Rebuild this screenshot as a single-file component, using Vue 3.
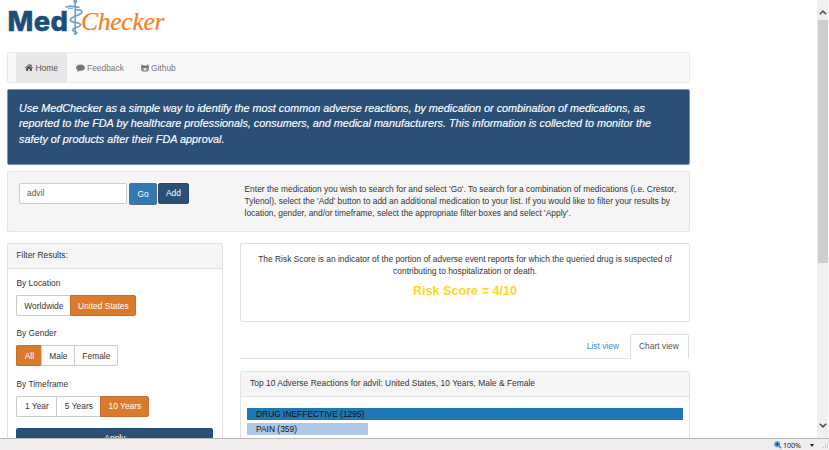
<script setup>
const navItems = [
  { label: 'Home', icon: 'home', active: true },
  { label: 'Feedback', icon: 'comment' },
  { label: 'Github', icon: 'github' },
]
const filters = [
  { title: 'By Location', options: [{ t: 'Worldwide', w: 54 }, { t: 'United States', w: 66, on: true }] },
  { title: 'By Gender', options: [{ t: 'All', w: 25, on: true }, { t: 'Male', w: 33 }, { t: 'Female', w: 44 }] },
  { title: 'By Timeframe', options: [{ t: '1 Year', w: 40 }, { t: '5 Years', w: 44 }, { t: '10 Years', w: 49, on: true }] },
]
const reactions = [
  { name: 'DRUG INEFFECTIVE', count: 1295, color: '#1f77b4' },
  { name: 'PAIN', count: 359, color: '#aec7e8' },
]
const barWidth = (count) => `${(count / 1295) * 100}%`
</script>

<template>
  <div class="window">
    <div class="viewport">
      <main class="page">
        <header class="logo">
          <span class="med">Med</span>
          <svg class="staff" viewBox="0 0 20 38" width="20" height="38" fill="none" stroke="#6f9fd4">
            <path d="M10.2 3V35" stroke-width="1.6" />
            <circle cx="10.2" cy="1.3" r="1.9" fill="#6f9fd4" stroke="none" />
            <path d="M0.5 7.2L5 6L14.5 7.3" stroke-width="1.7" />
            <path d="M3 8.2H8" stroke-width="1.2" />
            <path d="M11 10C17.5 9.5 19 12.5 14 14.6L8.5 17C3 19.5 5.5 22 11 22.6C17.5 23.5 16.5 26 11.5 27.4C7 28.7 6.3 30.5 10 31.6C13 32.6 12.5 33.5 9 34" stroke-width="1.7" />
          </svg>
          <span class="checker">Checker</span>
        </header>

        <nav class="navbar">
          <a v-for="item in navItems" :key="item.label" class="nav-item" :class="[item.icon, { active: item.active }]">
            <svg v-if="item.icon === 'home'" width="8" height="7" viewBox="0 0 16 14" fill="currentColor">
              <path d="M8 0L11 2.7V1H13.3V4.8L16 7.4L15 8.5L8 2.2L1 8.5L0 7.4Z" />
              <path d="M8 2.8L13.8 8V14H9.7V10H6.3V14H2.2V8Z" />
            </svg>
            <svg v-else-if="item.icon === 'comment'" width="9" height="8" viewBox="0 0 18 16" fill="currentColor">
              <path d="M9 1C14 1 18 3.8 18 7.3S14 13.5 9 13.5L7.5 13.4C6 14.8 4 15.6 1.7 15.8C3 14.7 3.5 13.6 3.5 12.3C1.3 11.2 0 9.4 0 7.3C0 3.8 4 1 9 1Z" />
            </svg>
            <svg v-else width="8" height="8" viewBox="0 0 16 16" fill="currentColor" fill-rule="evenodd">
              <path d="M1 0.500L5 2.800H11L15 0.500L15.500 5C16.500 9 16 15 11 15H5C0 15-0.500 9 0.500 5ZM4 8C2.500 9 2.500 13 8 13S13.500 9 12 8C11 7.500 10 8 8 8S5 7.500 4 8Z" />
              <ellipse cx="5.400" cy="10.200" rx="1.200" ry="1.600" />
              <ellipse cx="10.600" cy="10.200" rx="1.200" ry="1.600" />
            </svg>
            <span>{{ item.label }}</span>
          </a>
        </nav>

        <section class="banner">
          <p>Use MedChecker as a simple way to identify the most common adverse reactions, by medication or combination of medications, as</p>
          <p>reported to the FDA by healthcare professionals, consumers, and medical manufacturers. This information is collected to monitor the</p>
          <p>safety of products after their FDA approval.</p>
        </section>

        <section class="search">
          <form class="search-form" @submit.prevent>
            <input class="field" type="text" value="advil" />
            <button class="btn go">Go</button>
            <button class="btn add">Add</button>
          </form>
          <div class="help">
            <p>Enter the medication you wish to search for and select 'Go'. To search for a combination of medications (i.e. Crestor,</p>
            <p>Tylenol), select the 'Add' button to add an additional medication to your list. If you would like to filter your results by</p>
            <p>location, gender, and/or timeframe, select the appropriate filter boxes and select 'Apply'.</p>
          </div>
        </section>

        <div class="columns">
          <aside class="panel filter-panel">
            <h2 class="panel-heading">Filter Results:</h2>
            <div class="filter-body">
              <div v-for="f in filters" :key="f.title" class="filter">
                <h3>{{ f.title }}</h3>
                <div class="group">
                  <button v-for="o in f.options" :key="o.t" :class="{ on: o.on }" :style="{ width: o.w + 'px' }">{{ o.t }}</button>
                </div>
              </div>
              <button class="apply">Apply</button>
            </div>
          </aside>

          <div class="results">
            <section class="risk">
              <p>The Risk Score is an indicator of the portion of adverse event reports for which the queried drug is suspected of</p>
              <p>contributing to hospitalization or death.</p>
              <strong>Risk Score = 4/10</strong>
            </section>
            <div class="tabs">
              <a class="tab link">List view</a>
              <a class="tab current">Chart view</a>
            </div>
            <section class="panel chart-panel">
              <h2 class="panel-heading chart-title">Top 10 Adverse Reactions for advil: United States, 10 Years, Male &amp; Female</h2>
              <div class="chart">
                <div v-for="r in reactions" :key="r.name" class="bar" :style="{ width: barWidth(r.count), background: r.color }">
                  {{ r.name }} ({{ r.count }})
                </div>
              </div>
            </section>
          </div>
        </div>
      </main>

      <div class="scrollbar">
        <svg class="up" width="8" height="5" viewBox="0 0 8 5"><path d="M0.800 4.300L4 1.200L7.200 4.300" fill="none" stroke="#505050" stroke-width="1.600" /></svg>
        <div class="thumb"></div>
        <svg class="down" width="8" height="5" viewBox="0 0 8 5"><path d="M0.800 0.700L4 3.800L7.200 0.700" fill="none" stroke="#505050" stroke-width="1.600" /></svg>
      </div>
    </div>

    <footer class="status">
      <svg width="8" height="8" viewBox="0 0 16 16">
        <path d="M9 9L14.500 14.500" stroke="#7b6c62" stroke-width="2.500" />
        <circle cx="6.500" cy="6.500" r="5.500" fill="#4b9fe0" stroke="#4f86bd" />
        <path d="M3.500 6.500H9.500M6.500 3.500V9.500" stroke="#123f7c" stroke-width="2" />
      </svg>
      <span class="zoom">100%</span>
      <i class="caret"></i>
      <svg class="grip" width="5" height="5" viewBox="0 0 5 5" fill="#bdb9b9"><path d="M4 0h1v1h-1zM2 2h1v1h-1zM4 2h1v1h-1zM0 4h1v1h-1zM2 4h1v1h-1zM4 4h1v1h-1z" /></svg>
    </footer>
  </div>
</template>

<style>
html, body { margin: 0; overflow: hidden; background: #fff; }
</style>

<style scoped>
* { box-sizing: border-box; }
p, h2, h3 { margin: 0; font-weight: normal; white-space: nowrap; }
button, input { font: inherit; letter-spacing: inherit; margin: 0; padding: 0; }
.window { width: 829px; height: 450px; display: flex; flex-direction: column; overflow: hidden; font-family: "Liberation Sans", Arial, sans-serif; font-size: 8.4px; line-height: 12px; color: #333; letter-spacing: 0.02px; }
.viewport { height: 438px; display: flex; justify-content: space-between; overflow: hidden; }
.page { width: 690px; padding-left: 7px; flex: none; }
.logo { height: 52px; display: flex; align-items: flex-start; }
.med { font: 800 27.400px/36px Inter, "Liberation Sans", sans-serif; color: #1b4e79; width: 60px; padding: 3px 0 0 0.500px; letter-spacing: 0.300px; -webkit-text-stroke: 0.400px #1b4e79; }
.staff { flex: none; margin-left: -2px; }
.checker { font: italic 25.600px/32px "Liberation Serif", serif; letter-spacing: -0.300px; color: #f58025; padding-top: 6px; margin-left: -4px; -webkit-text-stroke: 0.200px #f58025; }

.navbar { height: 31px; background: #f8f8f8; border: 1px solid #e9e9e9; border-radius: 2px; display: flex; padding-left: 8px; }
.nav-item { display: flex; align-items: center; gap: 2px; padding: 0 9px; color: #777; }
.nav-item.active { background: #e7e7e7; color: #555; width: 51px; gap: 2.500px; }
.nav-item.github { padding-left: 8px; }
.nav-item svg { flex: none; }

.banner { height: 76px; margin-top: 6px; background: #2a5078; border: 1px solid #8095ad; border-radius: 2px; padding: 11px 11px; color: #fff; font-style: italic; font-size: 10.800px; line-height: 15.400px; letter-spacing: 0; -webkit-text-stroke: 0.150px #fff; }

.search { height: 61px; margin-top: 6px; background: #f5f5f5; border: 1px solid #e5e5e5; border-radius: 2px; display: flex; padding: 11px 11px 0; }
.search-form { width: 225.500px; display: flex; align-items: flex-start; }
.field { width: 108px; height: 21px; border: 1px solid #ccc; border-radius: 2px; padding: 0 7px 1px; color: #555; background: #fff; }
.btn { height: 21px; border: 1px solid #204d74; border-radius: 2px; color: #fff; background: #2a5078; text-align: center; padding-bottom: 1px; }
.go { width: 28px; height: 22px; margin: 0 1px 0 2px; background: #3278b4; border: 1px solid #5b6f80; }
.add { width: 31px; }
.help { flex: 1; }

.columns { display: flex; gap: 17px; margin-top: 11px; align-items: flex-start; }
.panel { border: 1px solid #e2e2e2; border-radius: 2px; }
.panel-heading { height: 25px; background: #f5f5f5; border-bottom: 1px solid #e2e2e2; padding: 0 8.400px; font-size: 8.400px; line-height: 23px; }
.chart-title { padding-left: 9px; letter-spacing: 0.040px; }
.filter-panel { width: 216px; height: 250px; }
.filter-body { padding: 8px 8.400px 0; }
.filter { height: 50.300px; }
.filter h3 { font-size: 8.400px; }
.group { display: flex; margin-top: 6px; }
.group button { height: 21px; border: 1px solid #ccc; background: #fff; color: #333; border-right-width: 0; flex: none; }
.group button:first-child { border-radius: 2px 0 0 2px; }
.group button:last-child { border-radius: 0 2px 2px 0; border-right-width: 1px; }
.group button.on { background: #db7a2b; border-color: #c46f2b; color: #fff; }
.apply { width: 197px; height: 20px; background: #2a5078; border: 1px solid #204d74; border-radius: 2px; color: #fff; display: block; }

.results { width: 450px; }
.risk { height: 79px; border: 1px solid #e0e0e0; border-radius: 2px; padding-top: 9px; display: flex; flex-direction: column; align-items: center; letter-spacing: 0.010px; }
.risk strong { font-size: 12.600px; line-height: 16px; margin-top: 6px; color: #ffd51e; }
.tabs { height: 25px; width: 449px; margin-top: 12px; border-bottom: 1px solid #e2e2e2; display: flex; justify-content: flex-end; }
.tab { line-height: 23px; padding: 0 9px; white-space: nowrap; }
.link { color: #428bca; padding: 1px 11px 0 9px; }
.current { height: 25px; width: 59px; padding: 0 8px; border: 1px solid #ddd; border-bottom-color: #fff; border-radius: 2px 2px 0 0; background: #fff; color: #555; }
.chart-panel { height: 150px; margin-top: 12px; }
.chart { padding: 11px 6px 0; }
.bar { height: 12px; line-height: 13px; margin-bottom: 3px; padding-left: 9px; color: #111; font-size: 8.400px; white-space: nowrap; }

.scrollbar { width: 12px; background: #f0f0f0; display: flex; flex-direction: column; align-items: center; flex: none; border-right: 1px solid #fafafa; }
.up { margin: 10px 0 5px; flex: none; }
.thumb { width: 10px; height: 243px; background: #cdcdcd; }
.down { margin: auto 0 10px; flex: none; }
.status { height: 12px; background: #f1eded; border-top: 1px solid #b9b9b9; display: flex; align-items: center; padding: 1px 1px 0 774px; color: #222; }
.status svg { flex: none; }
.zoom { font: 7.200px/10px "Noto Sans", sans-serif; letter-spacing: -0.100px; width: 20px; margin-left: 1px; }
.caret { border: 2px solid transparent; border-top: 3px solid #222; border-bottom: 0; margin-left: 7px; }
.grip { margin-left: auto; }
</style>
